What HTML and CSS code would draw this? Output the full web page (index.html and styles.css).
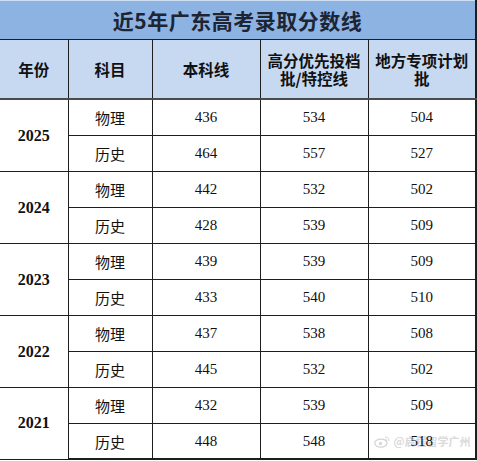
FILE: index.html
```
<!DOCTYPE html>
<html lang="zh">
<head>
<meta charset="utf-8">
<link rel="stylesheet" href="styles.css">
</head>
<body>
<div class="sheet">
<table class="scores">
  <colgroup>
    <col class="c-year"><col class="c-subj"><col class="c-num"><col class="c-num"><col class="c-num">
  </colgroup>
  <thead>
    <tr class="title-row"><th colspan="5" class="title">近5年广东高考录取分数线</th></tr>
    <tr class="head-row">
      <th>年份</th><th>科目</th><th>本科线</th><th><span class="hl">高分优先投档</span><span class="hl">批/特控线</span></th><th><span class="hl">地方专项计划</span><span class="hl">批</span></th>
    </tr>
  </thead>
  <tbody>
    <tr><td rowspan="2" class="year">2025</td><td class="subj">物理</td><td>436</td><td>534</td><td>504</td></tr>
    <tr><td class="subj">历史</td><td>464</td><td>557</td><td>527</td></tr>
    <tr><td rowspan="2" class="year">2024</td><td class="subj">物理</td><td>442</td><td>532</td><td>502</td></tr>
    <tr><td class="subj">历史</td><td>428</td><td>539</td><td>509</td></tr>
    <tr><td rowspan="2" class="year">2023</td><td class="subj">物理</td><td>439</td><td>539</td><td>509</td></tr>
    <tr><td class="subj">历史</td><td>433</td><td>540</td><td>510</td></tr>
    <tr><td rowspan="2" class="year">2022</td><td class="subj">物理</td><td>437</td><td>538</td><td>508</td></tr>
    <tr><td class="subj">历史</td><td>445</td><td>532</td><td>502</td></tr>
    <tr><td rowspan="2" class="year">2021</td><td class="subj">物理</td><td>432</td><td>539</td><td>509</td></tr>
    <tr class="final"><td class="subj">历史</td><td>448</td><td>548</td><td class="last"><span class="watermark"><svg class="wb" viewBox="0 0 20 16" width="17" height="13"><ellipse cx="8" cy="10" rx="7.5" ry="5" fill="none" stroke="#d4d4d4" stroke-width="1.6"/><circle cx="7.5" cy="10.5" r="2.2" fill="#d8d8d8"/><path d="M13 2.5 a5 5 0 0 1 5 5" fill="none" stroke="#d8d8d8" stroke-width="1.4"/><path d="M13 5 a2.5 2.5 0 0 1 2.5 2.5" fill="none" stroke="#d8d8d8" stroke-width="1.2"/></svg><span class="wm-text">@启程留学广州</span></span><span class="num">518</span></td></tr>
  </tbody>
</table>
</div>
</body>
</html>
```
FILE: styles.css
```
html, body {
  margin: 0;
  padding: 0;
  background: #ffffff;
}
.sheet {
  width: 477px;
  height: 461px;
  overflow: hidden;
}
.scores {
  border-collapse: collapse;
  table-layout: fixed;
  width: 477px;
  font-family: "Liberation Serif", "Noto Sans CJK SC", serif;
  color: #111;
}
.c-year { width: 68px; }
.c-subj { width: 84px; }
.c-num { width: 108px; }
.scores th, .scores td {
  padding: 0;
  text-align: center;
  vertical-align: middle;
  border: 1px solid #1e1e1e;
}
.scores tr > :first-child { border-left: none; }
.scores tr > :last-child { border-right: 2px solid #1e1e1e; }
.title-row th { border-top: none; }
.title {
  height: 39px;
  background: #8db3e2;
  box-shadow: inset 0 1px 0 #cfdff3;
  font-family: "Noto Sans CJK SC", sans-serif;
  font-weight: 700;
  font-size: 21px;
  color: #1d2433;
  letter-spacing: 0.5px;
}
.head-row th {
  height: 58px;
  background: #c6d9f1;
  font-family: "Noto Sans CJK SC", sans-serif;
  font-weight: 700;
  font-size: 15.5px;
  line-height: 20px;
  color: #111;
  border-bottom: 2px solid #4a4a4a;
}
.hl {
  display: block;
  line-height: 18px;
}
.scores td {
  height: 35px;
  font-size: 15px;
}
.scores td.subj {
  font-family: "Noto Sans CJK SC", sans-serif;
  font-size: 15px;
}
.scores td.year {
  font-weight: 700;
  font-size: 16px;
}
.scores tr.final td { height: 34px; border-bottom: 2px solid #1e1e1e; }
.last { position: relative; }
.num { position: relative; }
.watermark {
  position: absolute;
  left: 5px;
  top: 10px;
  display: flex;
  align-items: center;
  gap: 3px;
}
.wm-text {
  font-family: "Noto Sans CJK SC", sans-serif;
  font-size: 11px;
  line-height: 14px;
  color: #dadada;
  font-weight: 700;
}
```
